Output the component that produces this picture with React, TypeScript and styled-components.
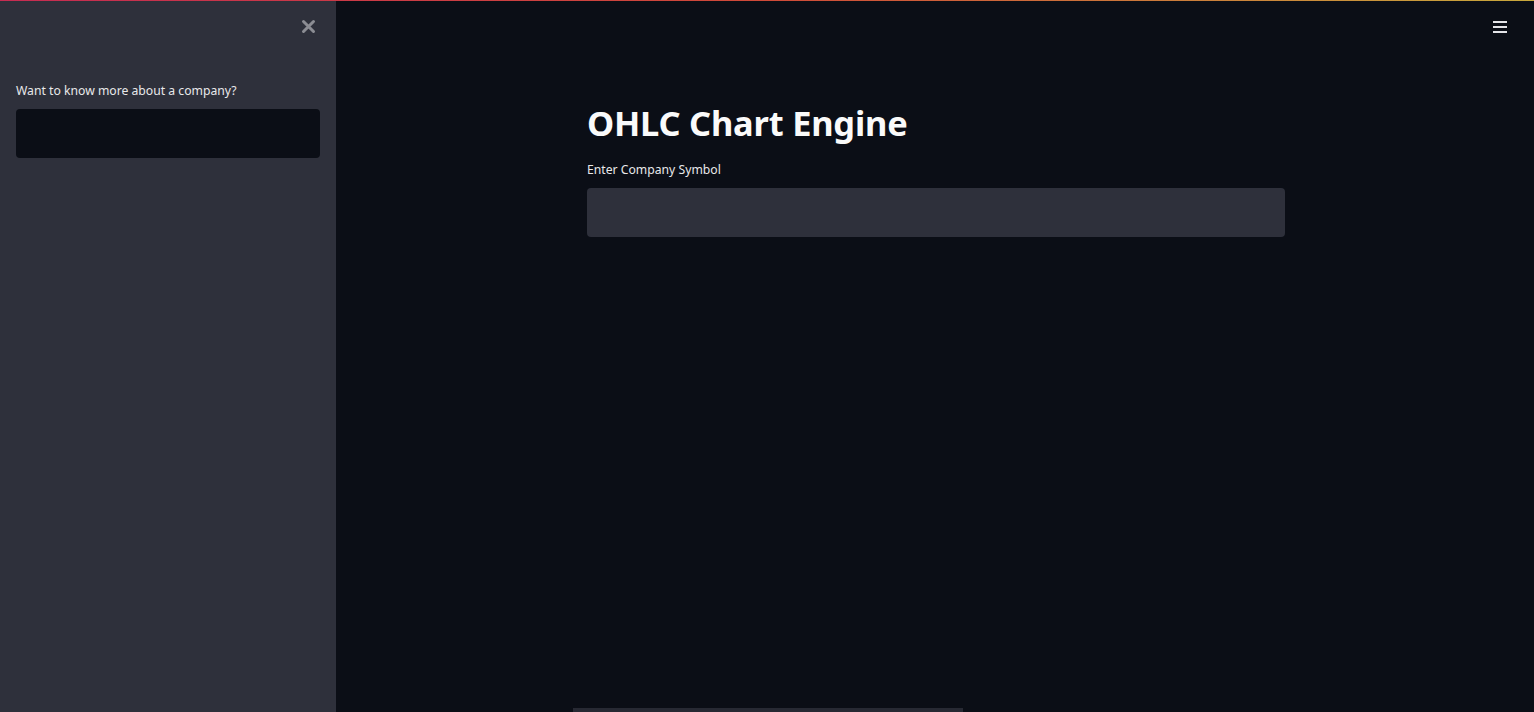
import styled, { createGlobalStyle } from 'styled-components';

const GlobalStyle = createGlobalStyle`
  html, body {
    margin: 0;
    padding: 0;
    background: #0b0e16;
    overflow: hidden;
  }
  * {
    box-sizing: border-box;
  }
`;

const Shell = styled.div`
  position: relative;
  display: flex;
  width: 1534px;
  height: 712px;
  background: #0b0e16;
  font-family: "Source Sans Pro", "Noto Sans", sans-serif;
  color: #fafafa;
  overflow: hidden;
`;

const Decoration = styled.div`
  position: absolute;
  top: 0;
  left: 0;
  right: 0;
  height: 1px;
  background: linear-gradient(90deg, #c62c52, #d04a38 50%, #c8a83c);
  z-index: 2;
`;

const Sidebar = styled.aside`
  position: relative;
  width: 336px;
  flex-shrink: 0;
  background: #2e303b;
  padding: 82px 16px 0 16px;
`;

const CloseButton = styled.button`
  position: absolute;
  top: 18px;
  right: 20px;
  width: 16px;
  height: 16px;
  padding: 0;
  border: none;
  background: transparent;
  display: flex;
  align-items: center;
  justify-content: center;
`;

const Label = styled.label`
  display: block;
  font-size: 12.2px;
  line-height: 18px;
  color: #e8e8ea;
  margin-bottom: 9px;
`;

const TextInput = styled.div<{ $tone: 'dark' | 'light' }>`
  height: 49px;
  border-radius: 4px;
  background: ${(p) => (p.$tone === 'dark' ? '#0b0e16' : '#2e303b')};
`;

const Main = styled.main`
  position: relative;
  flex: 1;
  display: flex;
  flex-direction: column;
  align-items: center;
  padding-left: 2px;
`;

const MenuButton = styled.button`
  position: absolute;
  top: 19px;
  right: 26px;
  width: 16px;
  height: 16px;
  padding: 0;
  border: none;
  background: transparent;
`;

const Content = styled.div`
  width: 698px;
  padding-top: 100px;
`;

const Title = styled.h1`
  margin: 0 0 15px 0;
  font-size: 34.4px;
  line-height: 46px;
  font-weight: 700;
  color: #fafafa;
  letter-spacing: -0.2px;
`;

const BottomStrip = styled.div`
  margin-top: auto;
  margin-left: 235px;
  align-self: flex-start;
  width: 390px;
  height: 4px;
  background: #272933;
`;

export default function App() {
  return (
    <>
      <GlobalStyle />
      <Shell>
        <Decoration />
        <Sidebar>
          <CloseButton aria-label="Close sidebar">
            <svg width="15" height="15" viewBox="0 0 15 15">
              <path d="M2.5 2.5 L12.5 12.5 M12.5 2.5 L2.5 12.5" stroke="#8b8c93" strokeWidth="3" strokeLinecap="round" />
            </svg>
          </CloseButton>
          <Label>Want to know more about a company?</Label>
          <TextInput $tone="dark" />
        </Sidebar>
        <Main>
          <MenuButton aria-label="Main menu">
            <svg width="16" height="16" viewBox="0 0 16 16">
              <rect x="1" y="2" width="14" height="2" fill="#e4e4e8" />
              <rect x="1" y="7" width="14" height="2" fill="#e4e4e8" />
              <rect x="1" y="12" width="14" height="2" fill="#e4e4e8" />
            </svg>
          </MenuButton>
          <Content>
            <Title>OHLC Chart Engine</Title>
            <Label>Enter Company Symbol</Label>
            <TextInput $tone="light" />
          </Content>
          <BottomStrip />
        </Main>
      </Shell>
    </>
  );
}
